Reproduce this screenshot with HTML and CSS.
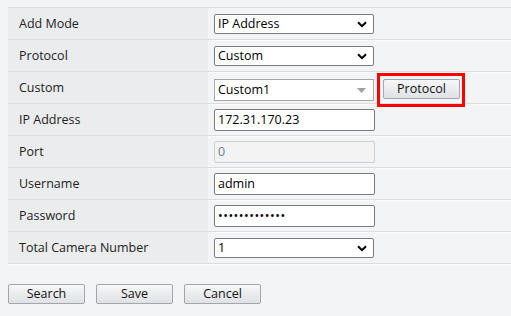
FILE: index.html
```html
<!DOCTYPE html>
<html lang="en">
<head>
    <meta charset="UTF-8">
    <title>Add Device</title>
    <link rel="stylesheet" href="styles.css">
</head>
<body>
    <div class="form">
        <div class="row">
            <div class="label">Add Mode</div>
            <div class="field">
                <div class="select">
                    <span>IP Address</span>
                    <svg class="chev" width="10" height="7" viewBox="0 0 10 7"><path d="M1 1.2 L5 5.2 L9 1.2" fill="none" stroke="#000" stroke-width="2"/></svg>
                </div>
            </div>
        </div>
        <div class="row">
            <div class="label">Protocol</div>
            <div class="field">
                <div class="select">
                    <span>Custom</span>
                    <svg class="chev" width="10" height="7" viewBox="0 0 10 7"><path d="M1 1.2 L5 5.2 L9 1.2" fill="none" stroke="#000" stroke-width="2"/></svg>
                </div>
            </div>
        </div>
        <div class="row">
            <div class="label">Custom</div>
            <div class="field lowered">
                <div class="select combo">
                    <span>Custom1</span>
                    <svg class="tri" width="9" height="5" viewBox="0 0 9 5"><path d="M0 0 H9 L4.5 5 Z" fill="#a0a0a0"/></svg>
                </div>
                <div class="highlight">
                    <button type="button" class="btn">Protocol</button>
                </div>
            </div>
        </div>
        <div class="row">
            <div class="label">IP Address</div>
            <div class="field"><input class="text" type="text" value="172.31.170.23"></div>
        </div>
        <div class="row">
            <div class="label">Port</div>
            <div class="field"><input class="text" type="text" value="0" disabled></div>
        </div>
        <div class="row">
            <div class="label">Username</div>
            <div class="field"><input class="text" type="text" value="admin"></div>
        </div>
        <div class="row">
            <div class="label">Password</div>
            <div class="field"><input class="text pass" type="password" value="admin12345678"></div>
        </div>
        <div class="row">
            <div class="label">Total Camera Number</div>
            <div class="field">
                <div class="select">
                    <span>1</span>
                    <svg class="chev" width="10" height="7" viewBox="0 0 10 7"><path d="M1 1.2 L5 5.2 L9 1.2" fill="none" stroke="#000" stroke-width="2"/></svg>
                </div>
            </div>
        </div>
    </div>

    <div class="actions">
        <button type="button" class="btn">Search</button>
        <button type="button" class="btn">Save</button>
        <button type="button" class="btn">Cancel</button>
    </div>
</body>
</html>
```

FILE: styles.css
```css
* {
    box-sizing: border-box;
}

body {
    margin: 0;
    padding: 7px 0 0 8px;
    background-color: #f3f4f6;
    font-family: "Open Sans", "Noto Sans", sans-serif;
    font-size: 12.5px;
    color: #222;
}

.form {
    border-top: 1px solid #dcdde0;
}

.row {
    display: flex;
    height: 32px;
    border-bottom: 1px solid #dcdde0;
    box-shadow: 0 1px 0 #fbfbfc;
}

.label {
    width: 200px;
    background-color: #ebecee;
    padding-left: 11px;
    display: flex;
    align-items: center;
}

.field {
    flex: 1;
    display: flex;
    align-items: center;
    padding-left: 6px;
}

.field.lowered {
    padding-top: 4px;
}

.select {
    position: relative;
    width: 160px;
    height: 20px;
    background: #fff;
    border: 1px solid #7a7a7a;
    border-radius: 2px;
    padding-left: 3px;
    display: flex;
    align-items: center;
    color: #000;
}

.select .chev {
    position: absolute;
    right: 6px;
    top: 6px;
}

.select.combo {
    height: 22px;
    border-color: #a6a6a6;
    border-radius: 0;
}

.select .tri {
    position: absolute;
    right: 7px;
    top: 8px;
}

.text {
    width: 161px;
    height: 22px;
    border: 1px solid #7a7a7a;
    border-radius: 2px;
    padding: 0 3px;
    font-family: inherit;
    font-size: 12.5px;
    color: #000;
    background: #fff;
    outline: none;
}

.text:disabled {
    background: #f3f3f3;
    border-color: #cfcfcf;
    color: #6d7f99;
}

.text.pass {
    letter-spacing: 0.5px;
}

.highlight {
    flex-shrink: 0;
    margin-left: 3px;
    border: 3px solid #f00;
    padding: 3px;
    height: 34px;
    width: 88px;
}

.btn {
    width: 77px;
    height: 20px;
    border: 1px solid #a3a7ad;
    border-radius: 2px;
    background: linear-gradient(#f7f7f8, #dfe1e4);
    font-family: inherit;
    font-size: 12.5px;
    color: #111;
    padding: 0;
    line-height: 18px;
}

.actions {
    display: flex;
    gap: 11px;
    padding-top: 20px;
}
```
